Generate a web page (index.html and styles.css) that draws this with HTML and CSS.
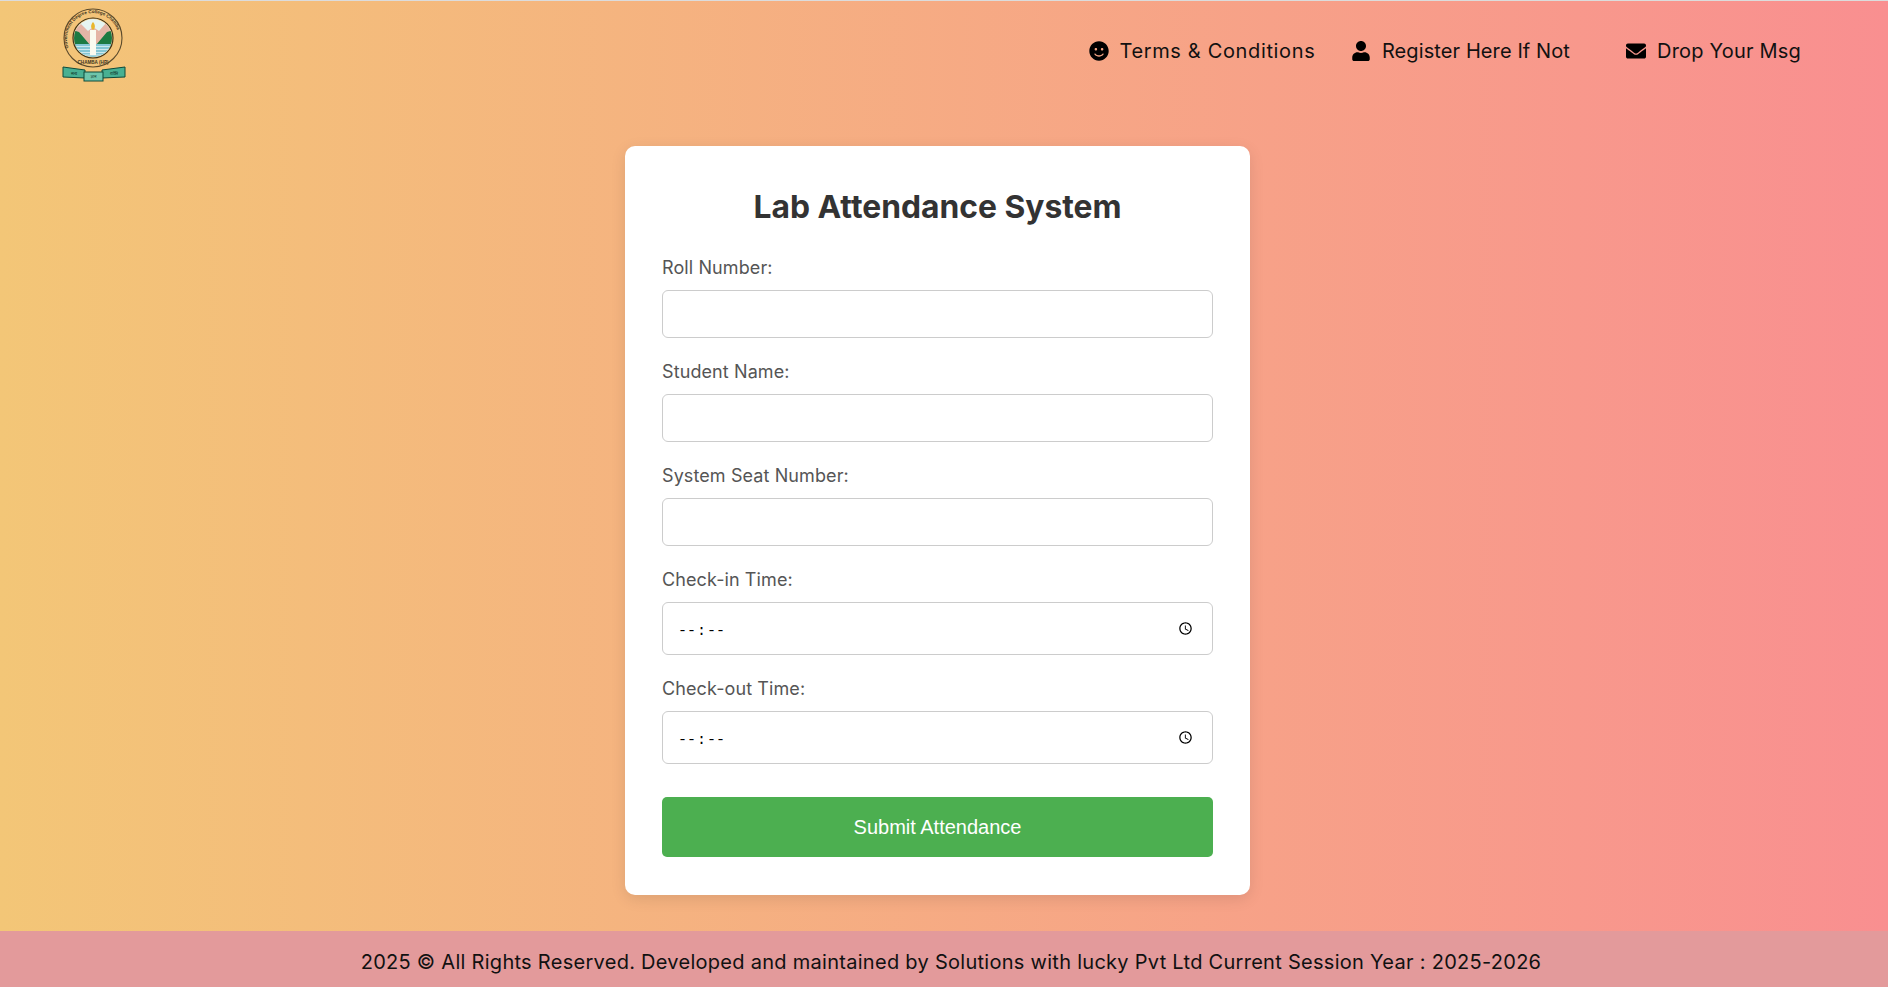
FILE: index.html
```html
<!DOCTYPE html>
<html lang="en">
<head>
    <meta charset="UTF-8">
    <meta name="viewport" content="width=device-width, initial-scale=1.0">
    <title>Lab Attendance System</title>
    <link rel="stylesheet" href="styles.css">
</head>
<body>
    <header class="topbar">
        <a href="#" class="logo">
            <svg width="64" height="74" viewBox="0 0 64 74">
                <defs>
                    <clipPath id="logoClip"><circle cx="31" cy="30" r="19"></circle></clipPath>
                    <path id="logoArc" d="M6.5 40 A26 26 0 1 1 56 38"></path>
                </defs>
                <circle cx="31" cy="30" r="29" fill="none" stroke="#5b4a2c" stroke-width="1.1"></circle>
                <circle cx="31" cy="30" r="20" fill="none" stroke="#3f3318" stroke-width="1.2"></circle>
                <text class="logo-ring"><textPath href="#logoArc">Government Degree College Chamba</textPath></text>
                <text class="logo-ring" x="31" y="55.5" text-anchor="middle">CHAMBA (HP)</text>
                <g clip-path="url(#logoClip)">
                    <rect x="10" y="10" width="44" height="40" fill="#e6f5f2"></rect>
                    <path d="M10 24 L19 16 L26 23 L31 19 L37 23 L44 15 L54 25 V36 H10 Z" fill="#e5b5a6"></path>
                    <path d="M10 22 L17 24 L28 37 V40 H10 Z M52 22 L45 24 L34 37 V40 H52 Z" fill="#1c7a42"></path>
                    <rect x="10" y="36" width="44" height="14" fill="#84c6d4"></rect>
                    <path d="M10 38.5 H52 M10 41.5 H52 M10 44.5 H52 M10 47 H52" stroke="#dff1f4" stroke-width="0.8"></path>
                </g>
                <rect x="28" y="22" width="6" height="25" fill="#fbfbf0"></rect>
                <path d="M31 14 C33.5 17 33.5 20 31 22 C28.500 20 28.500 17 31 14 Z" fill="#e9b72c"></path>
                <path d="M1 59 L23 62 V70 L1 69 Z M40 62 L63 59 V69 L40 70 Z" fill="#48b092" stroke="#0d4a3a" stroke-width="1"></path>
                <rect x="22" y="64" width="19" height="9" fill="#6ec6ab" stroke="#0d4a3a" stroke-width="1"></rect>
                <text class="logo-motto" x="12" y="66.500" text-anchor="middle">सत्य</text>
                <text class="logo-motto" x="31.500" y="70" text-anchor="middle">ज्ञान</text>
                <text class="logo-motto" x="52" y="66.500" text-anchor="middle">शक्ति</text>
            </svg>
        </a>
        <nav class="nav-links">
            <a href="#" class="nav-wide">
                <svg class="nav-icon" viewBox="0 0 496 512"><path d="M248 8C111 8 0 119 0 256s111 248 248 248 248-111 248-248S385 8 248 8zm80 168c17.7 0 32 14.3 32 32s-14.3 32-32 32-32-14.3-32-32 14.3-32 32-32zm-160 0c17.7 0 32 14.3 32 32s-14.3 32-32 32-32-14.3-32-32 14.3-32 32-32zm194.8 170.2C334.3 380.4 292.5 400 248 400s-86.3-19.6-114.8-53.8c-13.6-16.3 11-36.7 24.6-20.5 22.4 26.9 55.2 42.2 90.2 42.2s67.8-15.4 90.2-42.2c13.4-16.2 38.1 4.2 24.6 20.5z"></path></svg>
                Terms &amp; Conditions
            </a>
            <a href="#">
                <svg class="nav-icon" viewBox="0 0 448 512"><path d="M224 256c70.7 0 128-57.3 128-128S294.7 0 224 0 96 57.3 96 128s57.3 128 128 128zm89.6 32h-16.7c-22.2 10.2-46.9 16-72.9 16s-50.6-5.8-72.9-16h-16.7C60.2 288 0 348.2 0 422.4V464c0 26.5 21.5 48 48 48h352c26.5 0 48-21.5 48-48v-41.6c0-74.2-60.2-134.4-134.4-134.4z"></path></svg>
                Register Here If Not
            </a>
            <a href="#" class="nav-last">
                <svg class="nav-icon" viewBox="0 0 512 512"><path d="M502.3 190.8c3.9-3.1 9.7-.2 9.7 4.7V400c0 26.5-21.5 48-48 48H48c-26.5 0-48-21.5-48-48V195.6c0-5 5.7-7.8 9.7-4.7 22.4 17.4 52.1 39.5 154.1 113.6 21.1 15.4 56.7 47.8 92.2 47.6 35.7.3 72-32.8 92.3-47.6 102-74.1 131.6-96.3 154-113.7zM256 320c23.2.4 56.6-29.2 73.4-41.4 132.7-96.3 142.8-104.7 173.4-128.7 5.8-4.5 9.2-11.5 9.2-18.9v-19c0-26.5-21.5-48-48-48H48C21.5 64 0 85.5 0 112v19c0 7.4 3.4 14.3 9.2 18.9 30.6 23.9 40.7 32.4 173.4 128.7 16.8 12.2 50.2 41.8 73.4 41.4z"></path></svg>
                Drop Your Msg
            </a>
        </nav>
    </header>

    <main class="content">
        <form class="card">
            <h1>Lab Attendance System</h1>
            <div class="form-group">
                <label for="rollNo">Roll Number:</label>
                <input type="text" id="rollNo">
            </div>
            <div class="form-group">
                <label for="studentName">Student Name:</label>
                <input type="text" id="studentName">
            </div>
            <div class="form-group">
                <label for="seatNo">System Seat Number:</label>
                <input type="text" id="seatNo">
            </div>
            <div class="form-group">
                <label for="checkIn">Check-in Time:</label>
                <input type="time" id="checkIn">
            </div>
            <div class="form-group">
                <label for="checkOut">Check-out Time:</label>
                <input type="time" id="checkOut">
            </div>
            <button type="button" class="submit-btn">Submit Attendance</button>
        </form>
    </main>

    <footer class="footer">
        2025 © All Rights Reserved. Developed and maintained by Solutions with lucky Pvt Ltd Current Session Year : 2025-2026
    </footer>
</body>
</html>
```

FILE: styles.css
```css
* {
    box-sizing: border-box;
}

body {
    font-family: Inter, "Noto Sans", sans-serif;
    margin: 0;
    min-height: 100vh;
    display: flex;
    flex-direction: column;
    background: linear-gradient(to right, #f3c677, #f98f90);
    border-top: 1px solid #dcdcdc;
}

/* Top bar */
.topbar {
    display: flex;
    justify-content: space-between;
    height: 109px;
    padding: 7px 87px 0 62px;
}

.logo svg {
    display: block;
}

.logo-ring {
    font-size: 4.6px;
    font-weight: 700;
    font-family: "Liberation Sans", sans-serif;
    fill: #3d3420;
}

.logo-motto {
    font-size: 4px;
    font-family: "Noto Sans", sans-serif;
    fill: #0b2c22;
}

.nav-links {
    display: flex;
    align-items: flex-start;
    gap: 35.5px;
    padding-top: 31px;
}

.nav-links a {
    display: flex;
    align-items: center;
    gap: 11px;
    color: #111;
    text-decoration: none;
    font-size: 20px;
    line-height: 24px;
    letter-spacing: 0.1px;
}

.nav-links .nav-wide {
    gap: 10px;
    letter-spacing: 0.65px;
}

.nav-links .nav-last {
    margin-left: 20.5px;
    letter-spacing: 0.2px;
}

.nav-icon {
    width: 20px;
    height: 20px;
    fill: #000;
}

/* Form card */
.content {
    flex: 1;
    display: flex;
    justify-content: center;
    padding: 36px 13px 0 0;
}

.card {
    width: 625px;
    height: 749px;
    padding: 38px 37px;
    background: white;
    border-radius: 10px;
    box-shadow: 0 4px 15px rgba(0, 0, 0, 0.1);
}

.card h1 {
    margin: 0 0 21px;
    height: 50px;
    line-height: 46px;
    font-size: 31.8px;
    font-weight: 700;
    text-align: center;
    color: #333;
}

.form-group {
    margin-bottom: 21px;
}

.form-group label {
    display: block;
    height: 24px;
    line-height: 26px;
    margin-bottom: 11px;
    font-size: 18px;
    letter-spacing: 0.1px;
    color: #555;
}

.form-group input {
    display: block;
    width: 100%;
    height: 48px;
    padding: 0 15px;
    background: white;
    border: 1px solid #ccc;
    border-radius: 6px;
    font-size: 16px;
}

.form-group input[type="time"] {
    height: 53px;
    padding-left: 14px;
    font-family: "Liberation Mono", monospace;
    font-size: 15px;
}

.form-group input[type="time"]::-webkit-datetime-edit {
    padding-top: 5px;
}

.form-group input[type="time"]::-webkit-datetime-edit-text {
    font-weight: bold;
}

/* site shows a 24 hour clock */
.form-group input[type="time"]::-webkit-datetime-edit-ampm-field {
    display: none;
}

.submit-btn {
    display: block;
    width: 100%;
    height: 60px;
    margin-top: 33px;
    background-color: #4caf50;
    color: white;
    border: none;
    border-radius: 5px;
    font-family: "Liberation Sans", sans-serif;
    font-size: 20px;
    cursor: pointer;
}

/* Footer */
.footer {
    height: 56px;
    display: flex;
    align-items: center;
    justify-content: center;
    padding: 6px 0 0 14px;
    background: #e39a9b;
    color: #111;
    font-size: 20px;
    letter-spacing: 0.28px;
}
```
